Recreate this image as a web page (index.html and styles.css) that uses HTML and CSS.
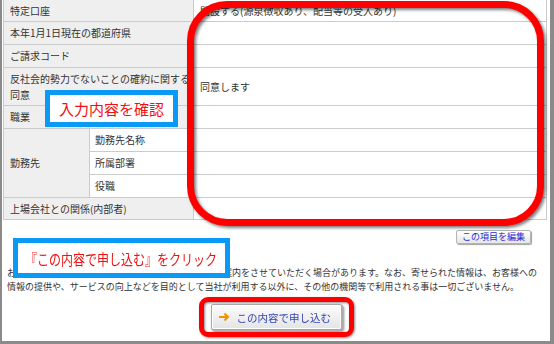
FILE: index.html
```html
<!DOCTYPE html>
<html lang="ja">
<head>
<meta charset="utf-8">
<link rel="stylesheet" href="styles.css">
</head>
<body>
<div class="frame">
  <div class="grid">
    <div class="lab wide">特定口座</div><div class="val">開設する(源泉徴収あり、配当等の受入あり)</div>
    <div class="lab wide">本年1月1日現在の都道府県</div><div class="val"></div>
    <div class="lab wide">ご請求コード</div><div class="val"></div>
    <div class="lab wide two">反社会的勢力でないことの確約に関する同意</div><div class="val">同意します</div>
    <div class="lab wide">職業</div><div class="val"></div>
    <div class="lab tall">勤務先</div><div class="sub">勤務先名称</div><div class="val"></div>
    <div class="sub">所属部署</div><div class="val"></div>
    <div class="sub">役職</div><div class="val"></div>
    <div class="lab wide">上場会社との関係(内部者)</div><div class="val"></div>
  </div>
  <div class="editrow"><button class="edit">この項目を編集</button></div>
  <p class="note"><span class="line">お客様の個人情報は、当社の各種商品やサービスのご案内をさせていただく場合があります。なお、寄せられた情報は、お客様への</span><span class="line">情報の提供や、サービスの向上などを目的として当社が利用する以外に、その他の機関等で利用される事は一切ございません。</span></p>
  <div class="submitrow">
    <div class="hl-btn">
      <button class="submit"><svg class="arrow" width="12" height="10" viewBox="0 0 12 10"><path d="M1 5H10M6.5 1.5L10 5L6.5 8.5" fill="none" stroke="#f39200" stroke-width="2"/></svg>この内容で申し込む</button>
    </div>
  </div>
  <div class="hl-red"></div>
  <div class="hl-blue b1">入力内容を確認</div>
  <div class="hl-blue b2"><span class="squeeze">『この内容で申し込む』をクリック</span></div>
</div>
</body>
</html>
```

FILE: styles.css
```css
html, body {
  margin: 0;
  padding: 0;
  background: #fff;
}
body {
  font-family: "Noto Sans CJK JP", "Noto Sans", sans-serif;
  color: #333;
}
.frame {
  position: relative;
  box-sizing: border-box;
  width: 554px;
  height: 344px;
  border-left: 2px solid #8a8a8a;
  border-right: 4px solid #8a8a8a;
  border-bottom: 3px solid #8a8a8a;
  background: #fff;
  overflow: hidden;
}
.grid {
  display: grid;
  grid-template-columns: 85px 103px 352px;
  grid-template-rows: 21px 22px 22px 37px 22px 22px 22px 22px 21px;
  gap: 1px;
  width: 542px;
  margin-left: 1px;
  background: #cbcbcb;
  border: 1px solid #cbcbcb;
  border-top: 0;
}
.grid > div {
  display: flex;
  align-items: center;
  font-size: 10px;
  line-height: 16px;
  color: #333;
  white-space: nowrap;
  overflow: hidden;
}
.lab {
  background: #efefef;
  padding: 0 2px 0 6px;
}
.lab.wide {
  grid-column: 1 / 3;
}
.lab.two {
  white-space: normal !important;
}
.lab.tall {
  grid-row: span 3;
}
.sub {
  background: #fff;
  padding: 0 5px;
}
.val {
  background: #fff;
  padding: 0 6px;
}
.editrow {
  display: flex;
  justify-content: flex-end;
  padding-right: 19px;
  margin-top: 10px;
}
.edit {
  box-sizing: border-box;
  width: 75px;
  height: 14px;
  padding: 0;
  font-family: "Noto Sans CJK JP", sans-serif;
  font-size: 9px;
  line-height: 12px;
  color: #2a2ad0;
  background: linear-gradient(#ffffff, #e6e6e6);
  border: 1px solid #b4b4b4;
  border-radius: 2px;
  box-shadow: 1px 1px 1px #a0a0a0;
}
.note {
  margin: 22px 0 0 5px;
  font-size: 9px;
  line-height: 14px;
  color: #333;
}
.note .line {
  display: block;
  white-space: nowrap;
}
.submitrow {
  display: flex;
  justify-content: center;
  margin-top: 3px;
}
.hl-btn {
  box-sizing: border-box;
  width: 155px;
  height: 40px;
  border: 5px solid #ff0000;
  border-radius: 9px;
  display: flex;
  align-items: center;
  justify-content: center;
  filter: drop-shadow(1px 1px 1px rgba(0,0,0,0.45));
}
.submit {
  box-sizing: border-box;
  width: 131px;
  height: 26px;
  display: flex;
  align-items: center;
  padding: 0 0 0 6px;
  gap: 7px;
  font-family: "Noto Sans CJK JP", sans-serif;
  font-size: 10.5px;
  color: #3346b8;
  background: linear-gradient(#fcfcfc, #e4e4e4);
  border: 1px solid #a8a8a8;
  border-radius: 2px;
  box-shadow: inset 0 0 0 1px #ffffff, 1px 1px 1px #b0b0b0;
}
.arrow {
  flex: none;
}
.hl-red {
  position: absolute;
  left: 185px;
  top: 1px;
  width: 357px;
  height: 225px;
  box-sizing: border-box;
  border: 7px solid #ff0000;
  border-radius: 40px;
  filter: drop-shadow(2px 2px 1.5px rgba(0,0,0,0.5));
}
.hl-blue {
  position: absolute;
  box-sizing: border-box;
  border: 5px solid #0a9af5;
  background: #fff;
  color: #f01010;
  display: flex;
  align-items: center;
  white-space: nowrap;
}
.b1 {
  left: 43px;
  top: 90px;
  width: 133px;
  height: 37px;
  padding-left: 9px;
  font-size: 15px;
}
.b2 {
  left: 11px;
  top: 238px;
  width: 217px;
  height: 40px;
  padding-left: 7px;
  font-size: 15px;
}
.squeeze {
  display: inline-block;
  transform: scaleX(0.8);
  transform-origin: left center;
}
```
